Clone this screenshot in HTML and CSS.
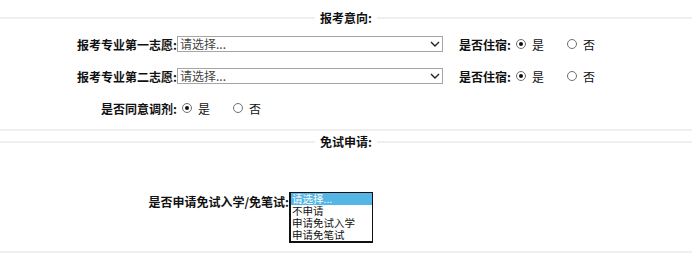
FILE: index.html
```html
<!DOCTYPE html>
<html lang="zh-CN">
<head>
    <meta charset="UTF-8">
    <title>报考意向</title>
    <link rel="stylesheet" href="styles.css">
</head>
<body>
    <form class="apply-form">
        <fieldset class="group group-intent">
            <legend>报考意向:</legend>

            <div class="row">
                <label class="label">报考专业第一志愿:</label>
                <span class="select-box">
                    <select class="major-select">
                        <option>请选择...</option>
                    </select>
                    <svg class="chevron" width="10" height="6" viewBox="0 0 10 6"><path d="M1 1 L5 5 L9 1" fill="none" stroke="#222" stroke-width="1.4"/></svg>
                </span>
                <span class="sub-label">是否住宿:</span>
                <input type="radio" name="stay1" checked><span class="opt">是</span>
                <input type="radio" name="stay1"><span class="opt">否</span>
            </div>

            <div class="row">
                <label class="label">报考专业第二志愿:</label>
                <span class="select-box">
                    <select class="major-select">
                        <option>请选择...</option>
                    </select>
                    <svg class="chevron" width="10" height="6" viewBox="0 0 10 6"><path d="M1 1 L5 5 L9 1" fill="none" stroke="#222" stroke-width="1.4"/></svg>
                </span>
                <span class="sub-label">是否住宿:</span>
                <input type="radio" name="stay2" checked><span class="opt">是</span>
                <input type="radio" name="stay2"><span class="opt">否</span>
            </div>

            <div class="row">
                <label class="label">是否同意调剂:</label>
                <input type="radio" name="adjust" checked><span class="opt">是</span>
                <input type="radio" name="adjust"><span class="opt">否</span>
            </div>
        </fieldset>

        <fieldset class="group group-exempt">
            <legend>免试申请:</legend>

            <div class="row row-exempt">
                <label class="label label-wide">是否申请免试入学/免笔试:</label>
                <ul class="exempt-list" role="listbox">
                    <li class="item selected" role="option">请选择...</li>
                    <li class="item" role="option">不申请</li>
                    <li class="item" role="option">申请免试入学</li>
                    <li class="item" role="option">申请免笔试</li>
                </ul>
            </div>
        </fieldset>
    </form>
</body>
</html>
```

FILE: styles.css
```css
* {
    margin: 0;
    padding: 0;
    box-sizing: border-box;
}

body {
    font-family: "Noto Sans CJK SC", sans-serif;
    background-color: #fff;
    color: #111;
    font-size: 12px;
}

.apply-form {
    padding-top: 11px;
}

.group {
    border: none;
    border-top: 2px solid #efefef;
    border-bottom: 2px solid #efefef;
}

.group legend {
    margin: 0 auto;
    padding: 0 5px;
    font-size: 12px;
    font-weight: 700;
    line-height: 14px;
}

.group-intent {
    padding: 3px 0 5px;
}

.group-exempt {
    margin-top: 4px;
    padding: 43px 0 8px;
}

.row {
    display: flex;
    align-items: center;
    height: 32px;
}

.label {
    width: 177px;
    text-align: right;
    font-weight: 700;
}

.select-box {
    display: inline-grid;
    align-items: center;
}

.select-box > * {
    grid-area: 1 / 1;
}

.major-select {
    appearance: none;
    width: 266px;
    height: 16px;
    border: 1px solid #a5a5a5;
    background: #fff;
    padding-left: 2px;
    font-family: "Noto Sans CJK SC", sans-serif;
    font-size: 12px;
    line-height: 14px;
    color: #444;
}

.chevron {
    justify-self: end;
    margin-right: 3px;
    pointer-events: none;
}

.sub-label {
    margin-left: 16px;
    font-weight: 700;
}

.row input[type="radio"] {
    appearance: none;
    width: 10px;
    height: 10px;
    border: 1px solid #6f6f6f;
    border-radius: 50%;
    background: #fff;
    margin: 0 6px 0 5px;
    display: inline-grid;
    place-items: center;
}

.row input[type="radio"]:checked::before {
    content: "";
    width: 4px;
    height: 4px;
    border-radius: 50%;
    background: #111;
}

.opt {
    font-size: 12px;
    margin-right: 18px;
}

.row-exempt {
    align-items: flex-start;
    height: 51px;
}

.label-wide {
    width: 289px;
    padding-top: 1px;
}

.exempt-list {
    list-style: none;
    width: 84px;
    height: 51px;
    border: 1px solid #111;
    border-bottom-width: 2px;
    border-left-width: 2px;
    background: #fff;
    font-family: "Liberation Sans", "Noto Sans CJK SC", sans-serif;
    font-size: 10.5px;
    overflow: hidden;
}

.item {
    height: 12px;
    line-height: 12px;
    padding: 0 1px;
    color: #111;
    white-space: nowrap;
}

.item.selected {
    background: #55b6e6;
    color: #fff;
}
```
